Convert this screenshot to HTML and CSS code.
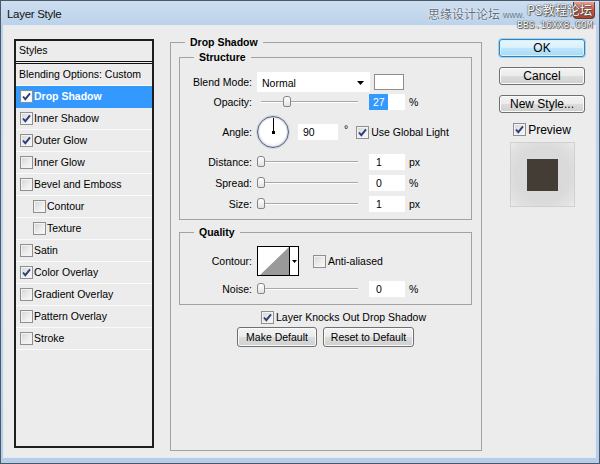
FILE: index.html
```html
<!DOCTYPE html>
<html>
<head>
<meta charset="utf-8">
<title>Layer Style</title>
<link rel="stylesheet" href="styles.css">
</head>
<body>
<div class="window">
  <div class="titlebar">
    <span class="title">Layer Style</span>
    <div class="close"></div>
    <div class="wm">
      <span class="wm-cn">思缘设计论坛</span>
      <span class="wm-www">www.</span>
      <span class="wm-ps">PS教程论坛</span>
      <span class="wm-bbs">BBS.16XX8.COM</span>
    </div>
  </div>
  <div class="client">
    <div class="list">
      <div class="list-head">Styles</div>
      <div class="item plain">Blending Options: Custom</div>
      <div class="item sel"><span class="cb on"><svg viewBox="0 0 11 11"><path d="M2 5.5 L4.3 8.2 L9 2.3"/></svg></span>Drop Shadow</div>
      <div class="item"><span class="cb on"><svg viewBox="0 0 11 11"><path d="M2 5.5 L4.3 8.2 L9 2.3"/></svg></span>Inner Shadow</div>
      <div class="item"><span class="cb on"><svg viewBox="0 0 11 11"><path d="M2 5.5 L4.3 8.2 L9 2.3"/></svg></span>Outer Glow</div>
      <div class="item"><span class="cb"></span>Inner Glow</div>
      <div class="item"><span class="cb"></span>Bevel and Emboss</div>
      <div class="item sub"><span class="cb"></span>Contour</div>
      <div class="item sub"><span class="cb"></span>Texture</div>
      <div class="item"><span class="cb"></span>Satin</div>
      <div class="item"><span class="cb on"><svg viewBox="0 0 11 11"><path d="M2 5.5 L4.3 8.2 L9 2.3"/></svg></span>Color Overlay</div>
      <div class="item"><span class="cb"></span>Gradient Overlay</div>
      <div class="item"><span class="cb"></span>Pattern Overlay</div>
      <div class="item"><span class="cb"></span>Stroke</div>
    </div>

    <fieldset class="group outer">
      <legend>Drop Shadow</legend>
      <fieldset class="group inner structure">
        <legend>Structure</legend>
        <div class="row r-blend">
          <span class="lbl">Blend Mode:</span>
          <div class="select"><span>Normal</span><svg class="arrow" viewBox="0 0 7 4"><path d="M0 0 H7 L3.5 4 Z"/></svg></div>
          <span class="swatch"></span>
        </div>
        <div class="row r-20">
          <span class="lbl">Opacity:</span>
          <div class="slider"><span class="track"></span><span class="thumb" style="left:26px"></span></div>
          <span class="num nopad"><span class="hl">27</span></span><span class="unit">%</span>
        </div>
        <div class="row r-angle">
          <span class="lbl">Angle:</span>
          <div class="dial"><span class="hand"></span><span class="dot"></span></div>
          <span class="num angle-num">90</span><span class="deg">°</span>
          <span class="cb on gl"><svg viewBox="0 0 11 11"><path d="M2 5.5 L4.3 8.2 L9 2.3"/></svg></span><span>Use Global Light</span>
        </div>
        <div class="row r-20">
          <span class="lbl">Distance:</span>
          <div class="slider"><span class="track"></span><span class="thumb" style="left:0px"></span></div>
          <span class="num">1</span><span class="unit">px</span>
        </div>
        <div class="row r-21">
          <span class="lbl">Spread:</span>
          <div class="slider"><span class="track"></span><span class="thumb" style="left:0px"></span></div>
          <span class="num">0</span><span class="unit">%</span>
        </div>
        <div class="row r-21">
          <span class="lbl">Size:</span>
          <div class="slider"><span class="track"></span><span class="thumb" style="left:0px"></span></div>
          <span class="num">1</span><span class="unit">px</span>
        </div>
      </fieldset>

      <fieldset class="group inner quality">
        <legend>Quality</legend>
        <div class="row r-contour">
          <span class="lbl">Contour:</span>
          <div class="contour">
            <svg class="curve" viewBox="0 0 31 28"><polygon points="2,28 31,0 31,28" fill="#9a9a9a"/></svg>
            <div class="drop"><svg viewBox="0 0 5 3"><path d="M0 0 H5 L2.5 3 Z"/></svg></div>
          </div>
          <span class="cb aa"></span><span>Anti-aliased</span>
        </div>
        <div class="row r-noise">
          <span class="lbl">Noise:</span>
          <div class="slider"><span class="track"></span><span class="thumb" style="left:0px"></span></div>
          <span class="num">0</span><span class="unit">%</span>
        </div>
      </fieldset>

      <div class="knock"><span class="cb on"><svg viewBox="0 0 11 11"><path d="M2 5.5 L4.3 8.2 L9 2.3"/></svg></span>Layer Knocks Out Drop Shadow</div>
      <div class="defaults">
        <button class="btn make">Make Default</button>
        <button class="btn reset">Reset to Default</button>
      </div>
    </fieldset>

    <div class="side">
      <button class="btn big ok">OK</button>
      <button class="btn big">Cancel</button>
      <button class="btn big">New Style...</button>
      <div class="preview-cb"><span class="cb on"><svg viewBox="0 0 11 11"><path d="M2 5.5 L4.3 8.2 L9 2.3"/></svg></span>Preview</div>
      <div class="preview"><div class="chip"></div></div>
    </div>
  </div>
</div>
</body>
</html>
```

FILE: styles.css
```css
* { box-sizing: border-box; }

body {
  margin: 0;
  font-family: "Liberation Sans", Arial, sans-serif;
  font-size: 10.5px;
  color: #000;
  background: #fff;
}

.window {
  width: 600px;
  height: 464px;
  border: 1px solid #4b5966;
  background: linear-gradient(#cddef0 0px, #bcd2e9 24px, #c1d6eb 60%, #b6cee7 100%);
  display: flex;
  flex-direction: column;
}

/* ---------- title bar ---------- */
.titlebar {
  height: 25px;
  flex: none;
  position: relative;
  display: flex;
  align-items: center;
  padding-left: 6px;
}
.title {
  font-size: 11.5px;
  letter-spacing: -0.3px;
  color: #111;
}
.close {
  position: absolute;
  right: 4px;
  top: 1px;
  width: 22px;
  height: 17px;
  border-radius: 0 0 4px 4px;
  background: linear-gradient(#e6a08f, #c9573f 55%, #b84028);
  border: 1px solid #6e3a33;
  border-top: none;
}
.wm {
  position: absolute;
  left: 424px;
  top: 0;
  width: 172px;
  height: 34px;
  font-family: "Noto Sans CJK SC", sans-serif;
}
.wm-cn {
  position: absolute;
  left: 3px;
  top: 6px;
  font-size: 12px;
  line-height: 14px;
  color: #5f6f80;
  text-shadow: 0 0 2px #fff, 0 0 1px #fff;
}
.wm-www {
  position: absolute;
  left: 78px;
  top: 9px;
  font-family: "Liberation Sans", sans-serif;
  font-size: 9px;
  color: #6f7f90;
}
.wm-ps {
  position: absolute;
  left: 102px;
  top: 1px;
  font-size: 12.5px;
  line-height: 15px;
  color: #fff;
  text-shadow: 0 0 1px #333, 0 0 1px #333, 1px 1px 1px #555;
}
.wm-bbs {
  position: absolute;
  left: 92px;
  top: 19px;
  font-family: "Liberation Mono", monospace;
  font-size: 10px;
  line-height: 12px;
  color: #fff;
  letter-spacing: -0.2px;
  text-shadow: 0 0 1px #333, 0 0 1px #333, 1px 1px 1px #556;
}

/* ---------- client ---------- */
.client {
  flex: 1;
  margin: 0 4px 6px 3px;
  background: #ececec;
  box-shadow: 0 0 0 1px #e2ebf4;
  display: flex;
  align-items: flex-start;
  padding: 10px 0 0 10px;
}

/* ---------- styles list ---------- */
.list {
  width: 140px;
  height: 409px;
  margin-top: 3px;
  border: 2px solid #1e1e1e;
  background: #ececec;
  flex: none;
}
.list-head {
  height: 23px;
  padding-left: 3px;
  line-height: 19px;
  border-bottom: 3px double #111;
}
.item {
  height: 22px;
  border-bottom: 1px solid #fafafa;
  display: flex;
  align-items: center;
  padding-left: 4px;
  padding-bottom: 1px;
}
.item.plain { padding-left: 3px; }
.item.sub { padding-left: 17px; }
.item .cb { margin-right: 1px; }
.item.sel {
  background: #3399ff;
  color: #fff;
  font-weight: bold;
  border-bottom-color: #3399ff;
}
.item.sel .cb {
  background: #fff;
}

/* ---------- checkbox ---------- */
.cb {
  width: 13px;
  height: 13px;
  flex: none;
  border: 1px solid #8e8f8f;
  background: linear-gradient(135deg, #d4d4d4, #eeeeee 60%, #fbfbfb);
  box-shadow: inset 0 0 0 1px #f3f3f3;
  display: inline-flex;
  align-items: center;
  justify-content: center;
  margin-right: 2px;
}
.cb svg {
  width: 11px;
  height: 11px;
}
.cb path {
  fill: none;
  stroke: #2b3f78;
  stroke-width: 1.9;
}

/* ---------- group boxes ---------- */
.group {
  margin: 0;
  min-width: 0;
  border: 1px solid #a2a2a2;
}
.group legend {
  font-weight: bold;
  line-height: 12px;
  height: 12px;
}
.outer {
  width: 312px;
  height: 415px;
  margin-left: 16px;
  padding: 3px 9px 0 8px;
  flex: none;
}
.outer > legend {
  padding: 0 5px;
  margin-left: 6px;
}
.inner {
  padding: 0;
}
.inner > legend {
  padding: 0 5px;
  margin-left: 14px;
}
.structure { height: 169px; }
.quality { height: 79px; margin-top: 6px; }

/* ---------- rows ---------- */
.row {
  display: flex;
  align-items: center;
  height: 20px;
}
.r-blend { margin-top: 9px; }
.r-20 { height: 20px; }
.r-21 { height: 21px; }
.r-angle { height: 40px; }
.r-contour { margin-top: 8px; height: 30px; }
.r-noise { height: 26px; }

.lbl {
  width: 72px;
  text-align: right;
  margin-right: 5px;
  flex: none;
}

.select {
  width: 113px;
  height: 20px;
  background: #fff;
  display: flex;
  align-items: center;
  justify-content: space-between;
  padding: 1px 5px 0 5px;
}
.select .arrow {
  width: 7px;
  height: 4px;
  margin-right: 1px;
}
.swatch {
  width: 30px;
  height: 16px;
  margin-left: 4px;
  background: #fff;
  border: 1px solid #8d8d8d;
  flex: none;
}

.slider {
  width: 105px;
  height: 14px;
  position: relative;
  flex: none;
}
.track {
  position: absolute;
  left: 4px;
  right: 4px;
  top: 6px;
  height: 2px;
  border-top: 1px solid #a9a9a9;
  border-bottom: 1px solid #fdfdfd;
}
.thumb {
  position: absolute;
  top: 1px;
  width: 8px;
  height: 11px;
  border: 1px solid #858585;
  border-radius: 3px 3px 2px 2px;
  background: linear-gradient(#ffffff, #e3e3e3);
}

.num {
  width: 36px;
  height: 16px;
  margin-left: 7px;
  background: #fff;
  line-height: 16px;
  padding-left: 7px;
  flex: none;
}
.num.nopad { padding-left: 0; }
.hl {
  display: inline-block;
  height: 16px;
  background: #3399ff;
  color: #fff;
  padding: 0 3px 0 4px;
}
.unit { margin-left: 4px; }

.dial {
  width: 32px;
  height: 32px;
  border-radius: 50%;
  border: 1px solid #56617c;
  background: radial-gradient(circle at 50% 45%, #ffffff 55%, #e7eaf0 80%, #d3d8e2);
  box-shadow: 0 0 0 1px #d2d8e2, inset 0 0 1px 1px #c9cfda;
  position: relative;
  flex: none;
}
.hand {
  position: absolute;
  left: 14.5px;
  top: 1px;
  width: 1.5px;
  height: 15px;
  background: #000;
}
.dot {
  position: absolute;
  left: 13.5px;
  top: 14px;
  width: 3px;
  height: 3px;
  background: #000;
}
.angle-num {
  width: 40px;
  margin-left: 9px;
  padding-left: 5px;
}
.deg {
  margin-left: 6px;
  position: relative;
  top: -3px;
}
.cb.gl { margin-left: 8px; }

.contour {
  width: 42px;
  height: 30px;
  border: 1px solid #000;
  background: #fff;
  display: flex;
  flex: none;
}
.contour .curve {
  width: 31px;
  height: 28px;
  display: block;
}
.contour .drop {
  width: 9px;
  border-left: 1px solid #000;
  display: flex;
  align-items: center;
  justify-content: center;
}
.contour .drop svg {
  width: 5px;
  height: 3px;
}
.cb.aa { margin-left: 14px; }

.knock {
  margin-top: 5px;
  height: 14px;
  padding-left: 82px;
  display: flex;
  align-items: center;
}

.defaults {
  margin-top: 3px;
  display: flex;
  justify-content: center;
  gap: 6px;
}

/* ---------- buttons ---------- */
.btn {
  font-family: "Liberation Sans", Arial, sans-serif;
  font-size: 10.5px;
  color: #000;
  height: 20px;
  padding: 0;
  border: 1px solid #707070;
  border-radius: 3px;
  background: linear-gradient(#f3f3f3 0%, #ebebeb 49%, #dddddd 50%, #cfcfcf 100%);
  box-shadow: inset 0 0 0 1px #fafafa;
}
.make { width: 80px; }
.reset { width: 91px; }

.side {
  width: 86px;
  margin-left: 17px;
  margin-top: 3px;
  display: flex;
  flex-direction: column;
  flex: none;
}
.btn.big {
  width: 86px;
  height: 18px;
  font-size: 12px;
  line-height: 14px;
}
.btn.big + .btn.big { margin-top: 10px; }
.btn.ok {
  border-color: #3c7fb1;
  background: linear-gradient(#e9f6fd 0%, #d9f0fc 49%, #bee6fd 50%, #a7d9f5 100%);
  box-shadow: 0 0 0 1px #9ad4f5, inset 0 0 0 1px #d6f0fd;
}
.preview-cb {
  margin-top: 10px;
  height: 13px;
  display: flex;
  align-items: center;
  justify-content: center;
  font-size: 12px;
}
.preview {
  align-self: center;
  width: 65px;
  height: 65px;
  margin-top: 6px;
  border: 1px solid #d0d0d0;
  background: radial-gradient(circle, #dadada 60%, #e2e2e2 85%, #ececec);
  display: flex;
  align-items: center;
  justify-content: center;
}
.chip {
  width: 31px;
  height: 32px;
  background: #433d35;
}
```
